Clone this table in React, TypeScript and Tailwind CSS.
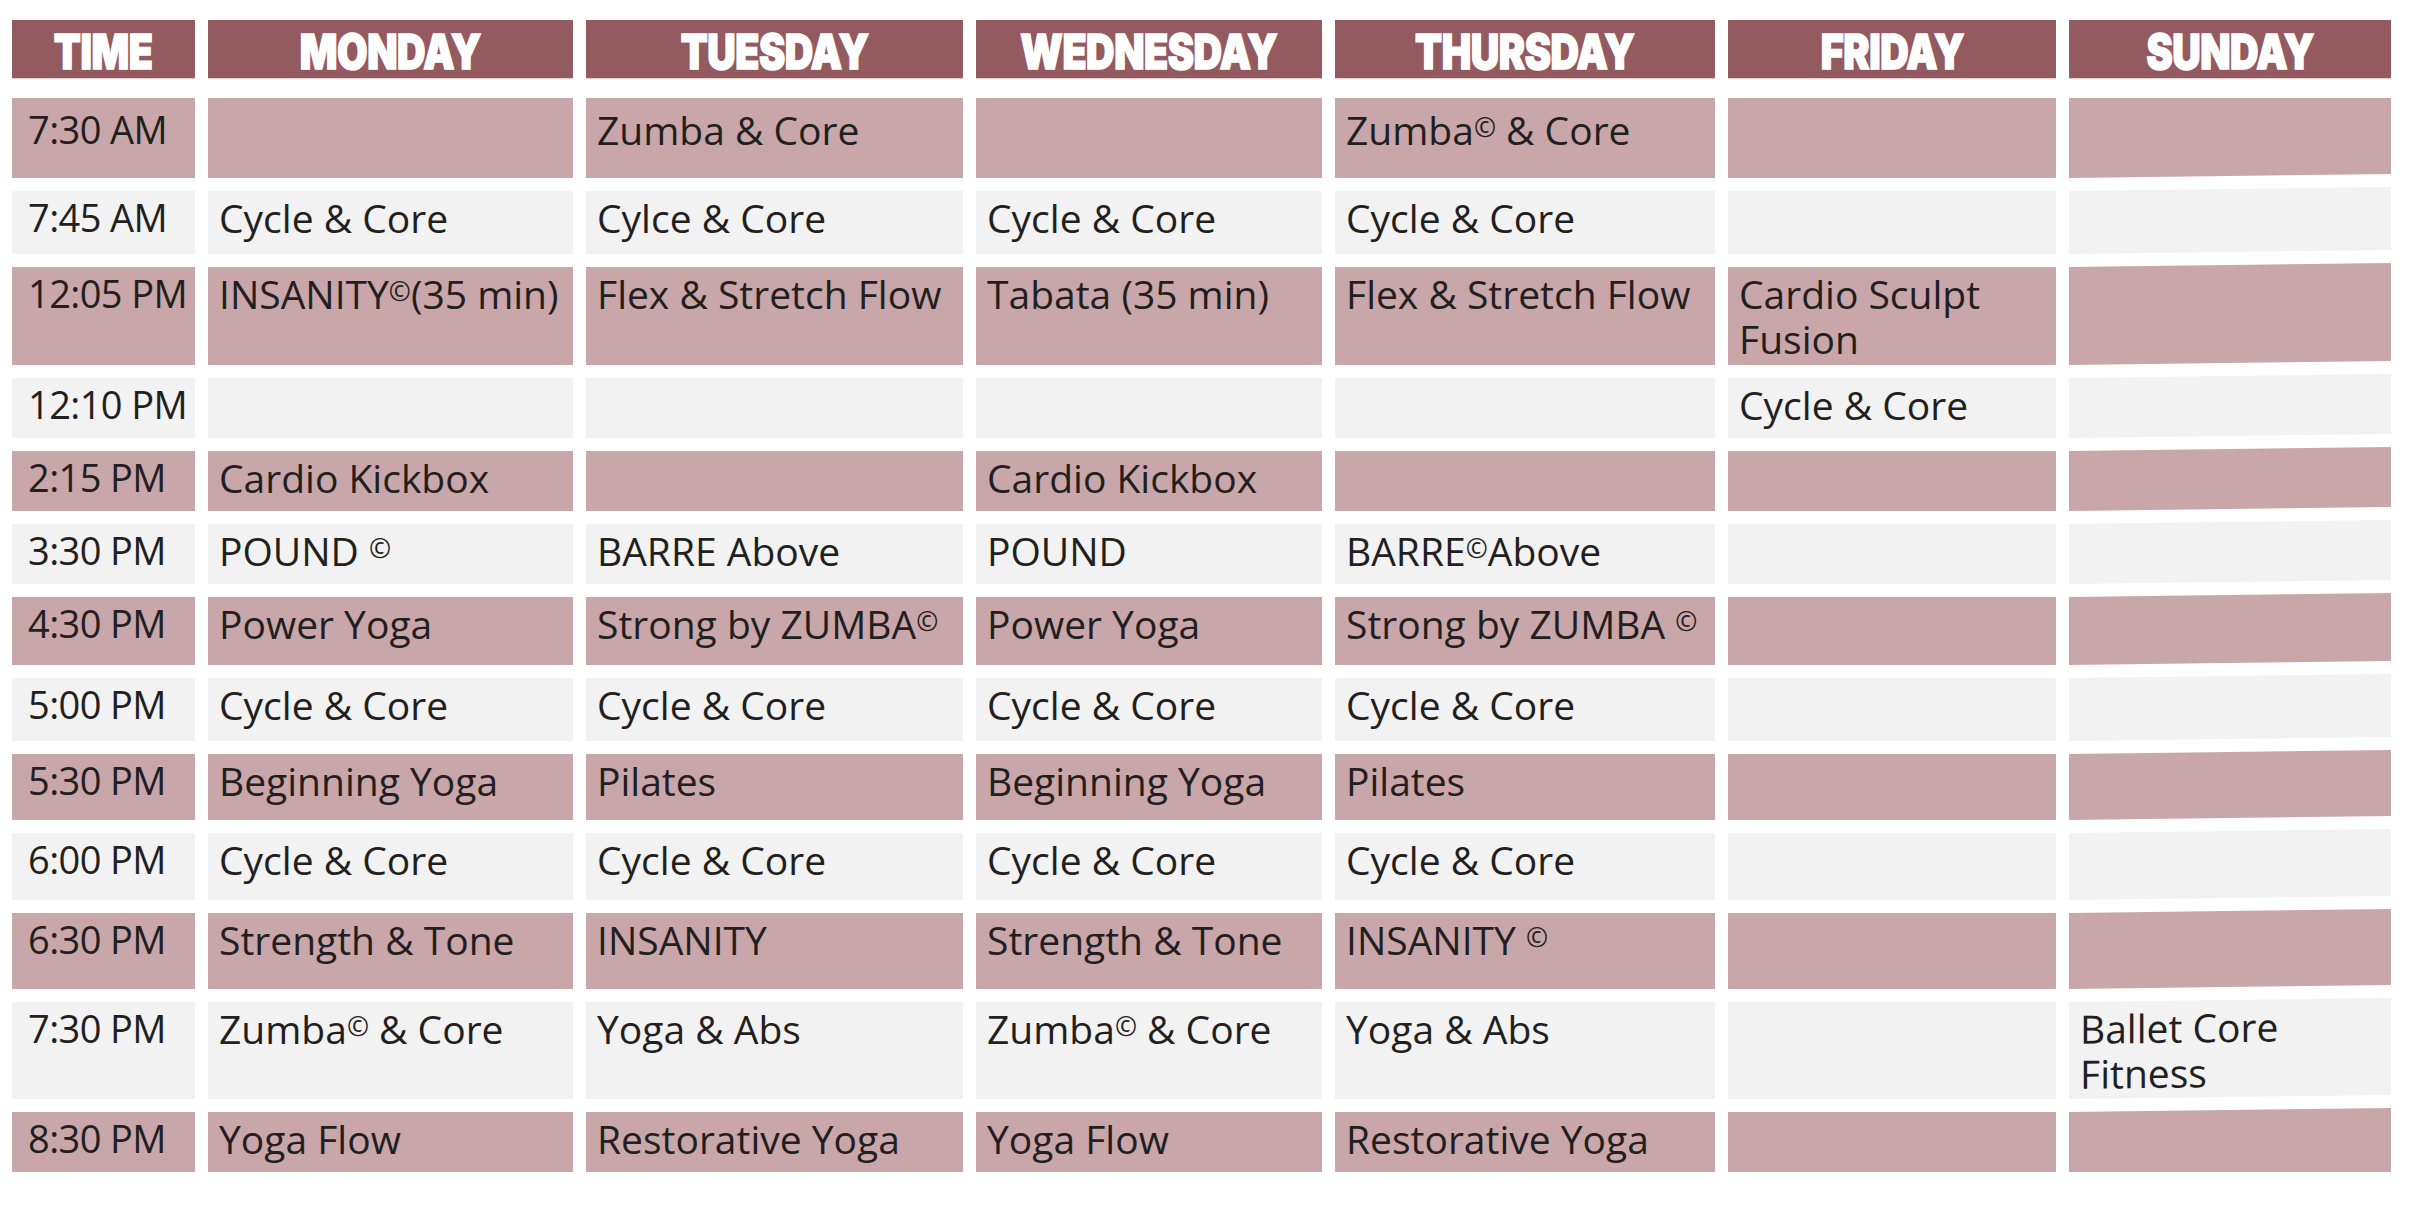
import type { ReactNode } from 'react'

const days = ['MONDAY', 'TUESDAY', 'WEDNESDAY', 'THURSDAY', 'FRIDAY', 'SUNDAY']

const C = () => <span className="relative -top-[0.3em] align-baseline text-[0.68em]">©</span>

interface Row {
  time: string
  height: string
  pink: boolean
  cells: ReactNode[]
}

const rows: Row[] = [
  { time: '7:30 AM', height: 'h-[80px]', pink: true, cells: ['', 'Zumba & Core', '', <>Zumba<C /> & Core</>, '', ''] },
  { time: '7:45 AM', height: 'h-[63px]', pink: false, cells: ['Cycle & Core', 'Cylce & Core', 'Cycle & Core', 'Cycle & Core', '', ''] },
  {
    time: '12:05 PM',
    height: 'h-[98px]',
    pink: true,
    cells: [<>INSANITY<C />(35 min)</>, 'Flex & Stretch Flow', 'Tabata (35 min)', 'Flex & Stretch Flow', 'Cardio Sculpt Fusion', ''],
  },
  { time: '12:10 PM', height: 'h-[60px]', pink: false, cells: ['', '', '', '', 'Cycle & Core', ''] },
  { time: '2:15 PM', height: 'h-[60px]', pink: true, cells: ['Cardio Kickbox', '', 'Cardio Kickbox', '', '', ''] },
  { time: '3:30 PM', height: 'h-[60px]', pink: false, cells: [<>POUND <C /></>, 'BARRE Above', 'POUND', <>BARRE<C />Above</>, '', ''] },
  {
    time: '4:30 PM',
    height: 'h-[68px]',
    pink: true,
    cells: ['Power Yoga', <>Strong by ZUMBA<C /></>, 'Power Yoga', <>Strong by ZUMBA <C /></>, '', ''],
  },
  { time: '5:00 PM', height: 'h-[63px]', pink: false, cells: ['Cycle & Core', 'Cycle & Core', 'Cycle & Core', 'Cycle & Core', '', ''] },
  { time: '5:30 PM', height: 'h-[66px]', pink: true, cells: ['Beginning Yoga', 'Pilates', 'Beginning Yoga', 'Pilates', '', ''] },
  { time: '6:00 PM', height: 'h-[67px]', pink: false, cells: ['Cycle & Core', 'Cycle & Core', 'Cycle & Core', 'Cycle & Core', '', ''] },
  { time: '6:30 PM', height: 'h-[76px]', pink: true, cells: ['Strength & Tone', 'INSANITY', 'Strength & Tone', <>INSANITY <C /></>, '', ''] },
  {
    time: '7:30 PM',
    height: 'h-[97px]',
    pink: false,
    cells: [<>Zumba<C /> & Core</>, 'Yoga & Abs', <>Zumba<C /> & Core</>, 'Yoga & Abs', '', 'Ballet Core Fitness'],
  },
  { time: '8:30 PM', height: 'h-[60px]', pink: true, cells: ['Yoga Flow', 'Restorative Yoga', 'Yoga Flow', 'Restorative Yoga', '', ''] },
]

const cols = 'grid grid-cols-[183px_365px_377px_346px_380px_328px_322px] gap-x-[13px]'

export default function App() {
  return (
    <div className="min-h-screen bg-white pl-[12px] pt-[20px] text-[#231f20]" style={{ fontFamily: '"Open Sans", sans-serif' }}>
      <div className={cols}>
        <HeaderCell label="TIME" />
        {days.map((d) => (
          <HeaderCell key={d} label={d} />
        ))}
      </div>

      <div className={`${cols} mt-[19px] gap-y-[13px]`}>
        {rows.map((row, i) => {
          const bg = row.pink ? 'bg-[#c9a6a9]' : 'bg-[#f2f2f2]'
          const first = i === 0
          const last = i === rows.length - 1
          return (
            <div key={row.time} className="contents">
              <div
                className={`${row.height} ${bg} ${first ? 'pt-[9px]' : 'pt-[4px]'} pl-[16px] text-[38px] leading-[45px] tracking-[-0.6px] whitespace-nowrap`}
              >
                {row.time}
              </div>
              {row.cells.map((cell, j) => {
                const sunday = j === 5
                let shape = ''
                if (sunday) {
                  if (first) shape = '[clip-path:polygon(0_0,100%_0,100%_calc(100%-4px),0_100%)]'
                  else if (last) shape = '-mt-[4px] pt-[8px] [clip-path:polygon(0_4px,100%_0,100%_100%,0_100%)]'
                  else shape = 'origin-top-left skew-y-[-0.7deg]'
                }
                return (
                  <div
                    key={j}
                    className={`${bg} ${first ? 'pt-[9px]' : 'pt-[4px]'} pl-[11px] pr-[6px] text-[39px] leading-[45px] ${
                      j >= 4 ? '' : 'whitespace-nowrap'
                    } ${shape}`}
                  >
                    {cell}
                  </div>
                )
              })}
            </div>
          )
        })}
      </div>
    </div>
  )
}

function HeaderCell({ label }: { label: string }) {
  return (
    <div className="flex h-[59px] items-center justify-center overflow-hidden border-b border-[#e6cdcf] bg-[#935a5f] pt-[5px] text-white">
      <span
        className="inline-block scale-x-[0.82] text-[48px] font-black leading-none tracking-[-0.5px] [-webkit-text-stroke:1.5px_white]"
        style={{ fontFamily: 'Inter, sans-serif' }}
      >
        {label}
      </span>
    </div>
  )
}
